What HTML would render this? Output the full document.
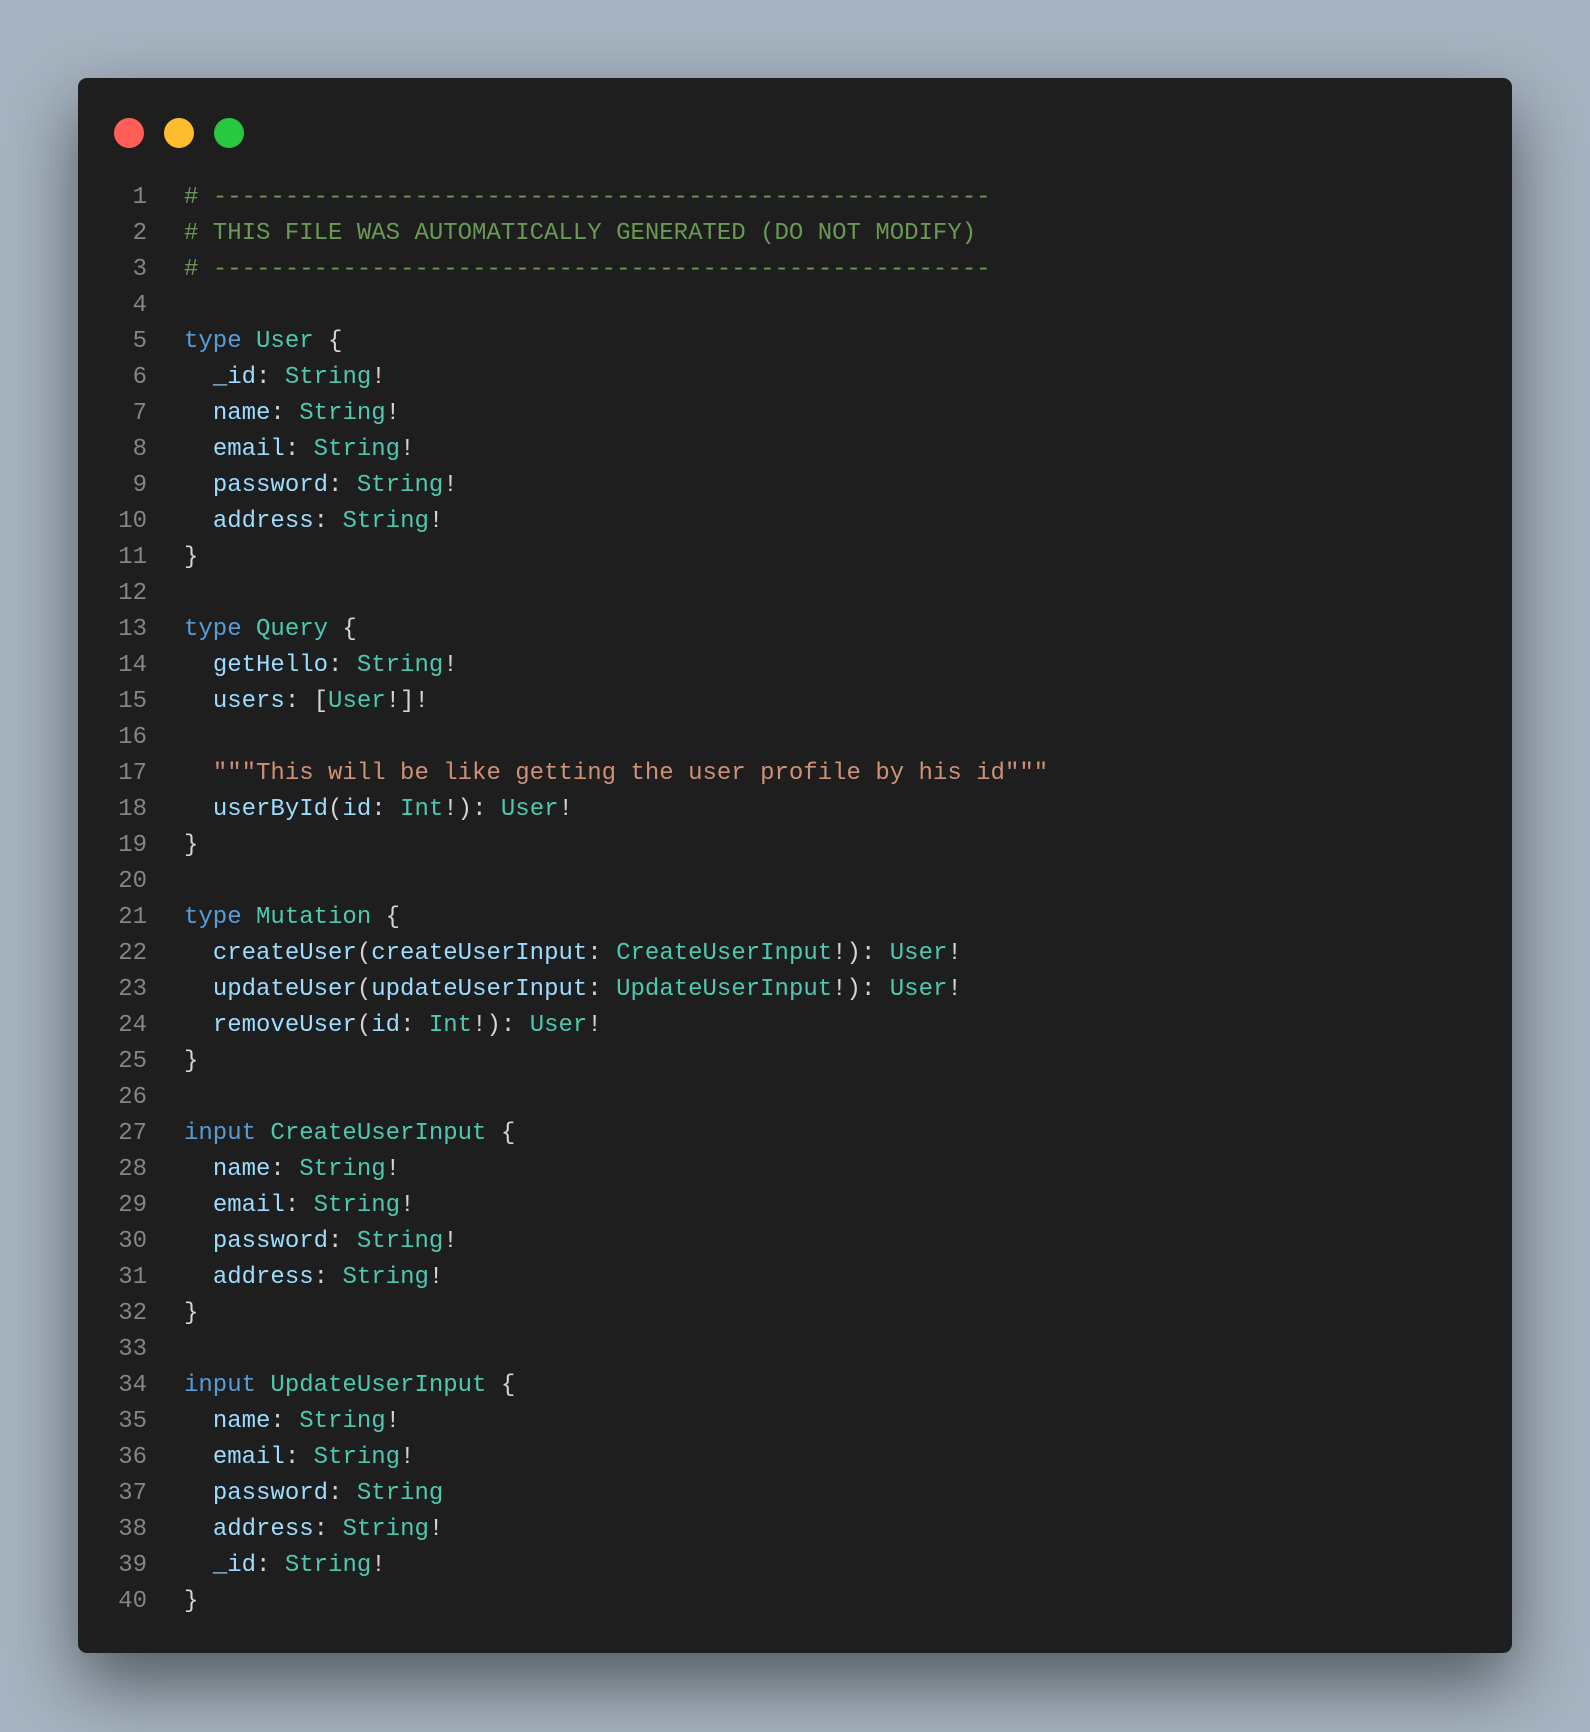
<!DOCTYPE html>
<html><head><style>
html,body{margin:0;padding:0;}
body{width:1590px;height:1732px;background:#a6b3c0;position:relative;overflow:hidden;}
.win{position:absolute;left:78px;top:78px;width:1434px;height:1575px;background:#1e1e1e;border-radius:9px;box-shadow:0 30px 70px rgba(0,0,0,0.5);}
.dot{position:absolute;top:40px;width:30px;height:30px;border-radius:50%;}
pre{position:absolute;margin:0;top:102px;font-family:"Liberation Mono",monospace;font-size:24px;line-height:36px;}
.ln{left:0;width:69px;text-align:right;color:#858585;}
.code{left:106px;color:#d4d4d4;}
.c{color:#6a9955}.k{color:#569cd6}.t{color:#4ec9b0}.f{color:#9cdcfe}.s{color:#ce9178}.p{color:#d4d4d4}
</style></head><body>
<div class="win">
<div class="dot" style="left:36px;background:#ff5f57"></div>
<div class="dot" style="left:86px;background:#febc2e"></div>
<div class="dot" style="left:136px;background:#28c840"></div>
<pre class="ln">1
2
3
4
5
6
7
8
9
10
11
12
13
14
15
16
17
18
19
20
21
22
23
24
25
26
27
28
29
30
31
32
33
34
35
36
37
38
39
40</pre>
<pre class="code"><span class="c"># ------------------------------------------------------</span>
<span class="c"># THIS FILE WAS AUTOMATICALLY GENERATED (DO NOT MODIFY)</span>
<span class="c"># ------------------------------------------------------</span>

<span class="k">type</span> <span class="t">User</span> {
  <span class="f">_id</span>: <span class="t">String</span>!
  <span class="f">name</span>: <span class="t">String</span>!
  <span class="f">email</span>: <span class="t">String</span>!
  <span class="f">password</span>: <span class="t">String</span>!
  <span class="f">address</span>: <span class="t">String</span>!
}

<span class="k">type</span> <span class="t">Query</span> {
  <span class="f">getHello</span>: <span class="t">String</span>!
  <span class="f">users</span>: [<span class="t">User</span>!]!

  <span class="s">"""This will be like getting the user profile by his id"""</span>
  <span class="f">userById</span>(<span class="f">id</span>: <span class="t">Int</span>!): <span class="t">User</span>!
}

<span class="k">type</span> <span class="t">Mutation</span> {
  <span class="f">createUser</span>(<span class="f">createUserInput</span>: <span class="t">CreateUserInput</span>!): <span class="t">User</span>!
  <span class="f">updateUser</span>(<span class="f">updateUserInput</span>: <span class="t">UpdateUserInput</span>!): <span class="t">User</span>!
  <span class="f">removeUser</span>(<span class="f">id</span>: <span class="t">Int</span>!): <span class="t">User</span>!
}

<span class="k">input</span> <span class="t">CreateUserInput</span> {
  <span class="f">name</span>: <span class="t">String</span>!
  <span class="f">email</span>: <span class="t">String</span>!
  <span class="f">password</span>: <span class="t">String</span>!
  <span class="f">address</span>: <span class="t">String</span>!
}

<span class="k">input</span> <span class="t">UpdateUserInput</span> {
  <span class="f">name</span>: <span class="t">String</span>!
  <span class="f">email</span>: <span class="t">String</span>!
  <span class="f">password</span>: <span class="t">String</span>
  <span class="f">address</span>: <span class="t">String</span>!
  <span class="f">_id</span>: <span class="t">String</span>!
}</pre>
</div>
</body></html>
